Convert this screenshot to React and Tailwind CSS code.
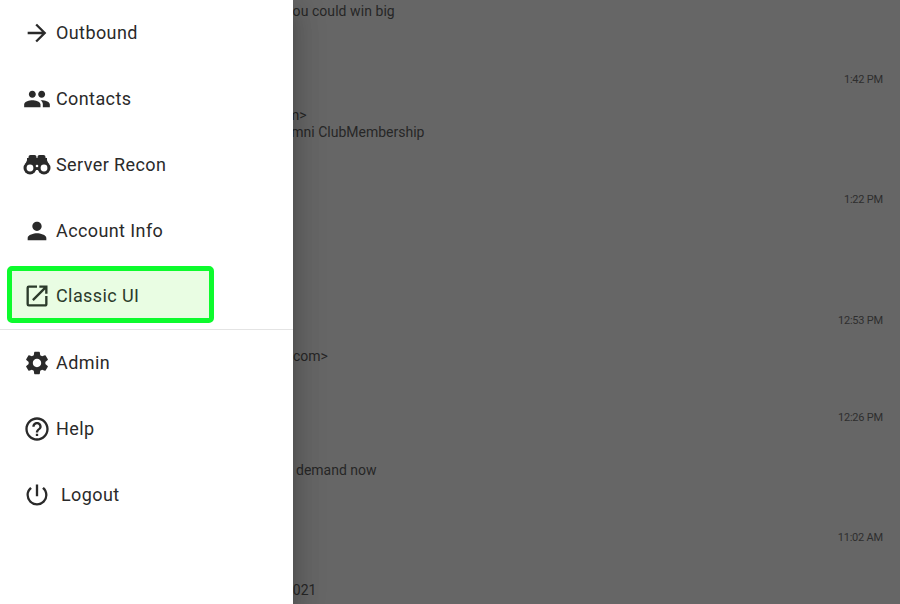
import React from "react";
import { MdArrowForward, MdPeople, MdPerson, MdOpenInNew, MdSettings, MdHelpOutline, MdPowerSettingsNew } from "react-icons/md";

function Binoculars() {
  return (
    <svg width="28" height="20" viewBox="0 0 28 20" className="shrink-0">
      <rect x="5.5" y="0" width="8" height="5" rx="2" fill="currentColor" />
      <rect x="14.5" y="0" width="8" height="5" rx="2" fill="currentColor" />
      <path d="M5 3 L1 12 H27 L23 3 Z" fill="currentColor" />
      <rect x="4" y="3" width="20" height="12" fill="currentColor" />
      <circle cx="7" cy="13" r="6.5" fill="currentColor" />
      <circle cx="21" cy="13" r="6.5" fill="currentColor" />
      <circle cx="7" cy="13" r="3.4" fill="#ffffff" />
      <circle cx="21" cy="13" r="3.4" fill="#ffffff" />
      <circle cx="14" cy="11" r="1.3" fill="#ffffff" />
    </svg>
  );
}

function Item({ icon: Icon, label, extra = "ml-[5px]" }) {
  return (
    <div className="flex h-[66px] items-center pl-[23px]">
      <span className="flex w-[28px] justify-center shrink-0">
        <Icon className="text-[28px]" />
      </span>
      <span className={`mb-[1px] text-[18px] leading-none tracking-[0.4px] ${extra}`}>{label}</span>
    </div>
  );
}

function Row({ time, h, lines = [] }) {
  return (
    <div className="flex flex-col" style={{ height: h }}>
      <div className="h-[36px] pr-[17px] text-right text-[11px] leading-[17px] tracking-[-0.2px] text-[#2e2e2e]">{time}</div>
      {lines.map((l, i) => (
        <div key={i} className="h-[17px] whitespace-nowrap text-[14px] leading-[17px] text-[#262626]" style={{ marginLeft: l.x }}>
          {l.t}
        </div>
      ))}
    </div>
  );
}

export default function App() {
  return (
    <div className="relative h-[604px] w-[900px] overflow-hidden bg-[#666666] font-['Roboto',sans-serif]">
      <div className="flex flex-col">
        <div className="h-[71px] pt-[3px]">
          <div className="ml-[286px] whitespace-nowrap text-[14px] leading-[17px] tracking-[0.06px] text-[#262626]">you could win big</div>
        </div>
        <Row time="1:42 PM" h={120} lines={[{ t: "m>", x: 287 }, { t: "Alumni ClubMembership", x: 271 }]} />
        <Row time="1:22 PM" h={121} />
        <Row time="12:53 PM" h={97} lines={[{ t: "com>", x: 293 }]} />
        <Row time="12:26 PM" h={120} lines={[{ t: "", x: 0 }, { t: "demand now", x: 296 }]} />
        <Row time="11:02 AM" h={75} lines={[{ t: "", x: 0 }, { t: "2021", x: 285 }]} />
      </div>

      <aside className="absolute left-0 top-0 flex h-[604px] w-[293px] flex-col bg-white text-[#2a2a2a] shadow-[0_8px_10px_-5px_rgba(0,0,0,0.2),0_16px_24px_2px_rgba(0,0,0,0.14),0_6px_30px_5px_rgba(0,0,0,0.12)]">
        <Item icon={MdArrowForward} label="Outbound" />
        <Item icon={MdPeople} label="Contacts" />
        <Item icon={Binoculars} label="Server Recon" />
        <Item icon={MdPerson} label="Account Info" />
        <div className="h-[65px] pl-[7px] pt-[2px]">
          <div className="flex h-[57px] w-[207px] items-center rounded-[5px] border-[5px] border-[#0dfb2d] bg-[#e9fde3] pl-[11px] text-[#2b3b2b]">
            <span className="mt-[2px] flex w-[28px] justify-center shrink-0">
              <MdOpenInNew className="text-[28px]" />
            </span>
            <span className="ml-[5px] mt-[2px] text-[18px] leading-none tracking-[0.4px]">Classic UI</span>
          </div>
        </div>
        <div className="h-[1px] bg-[#e4e4e4]" />
        <Item icon={MdSettings} label="Admin" />
        <Item icon={MdHelpOutline} label="Help" />
        <Item icon={MdPowerSettingsNew} label="Logout" extra="ml-[10px]" />
      </aside>
    </div>
  );
}
